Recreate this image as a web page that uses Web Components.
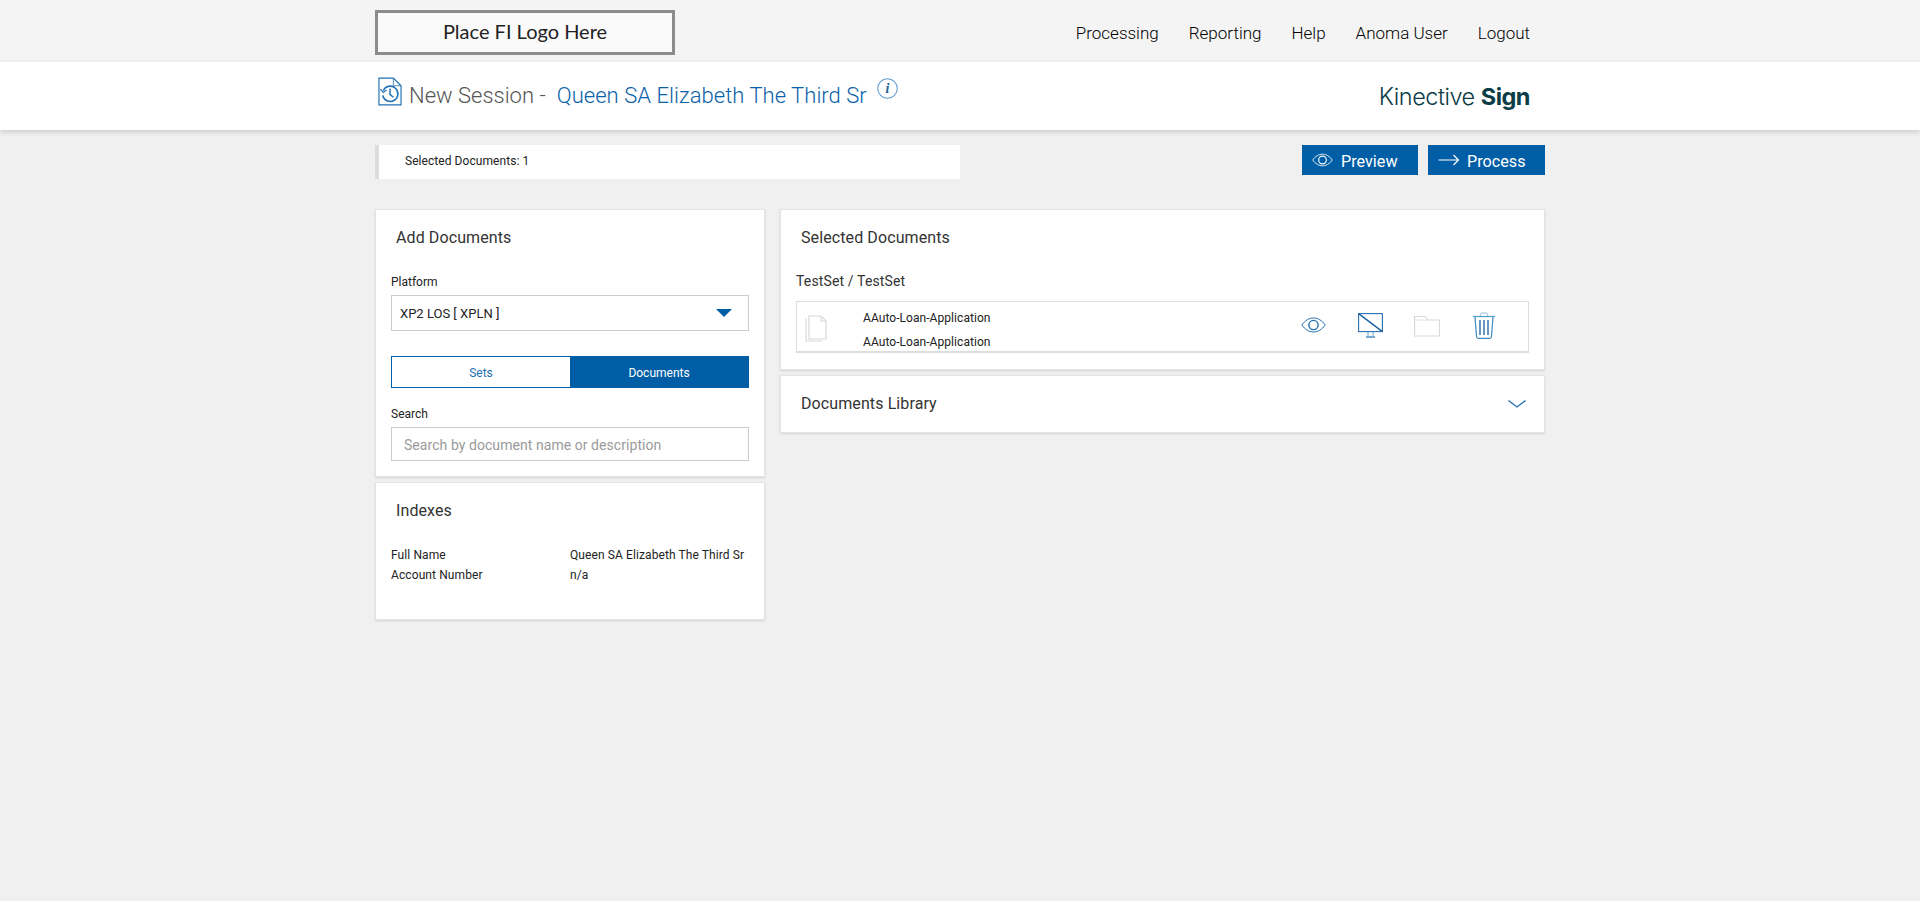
<!DOCTYPE html>
<html lang="en">
<head>
<meta charset="utf-8">
<title>New Session</title>
<style>
  html, body { margin: 0; padding: 0; background: #f0f0f0; }
  body { font-family: Roboto, "Liberation Sans", sans-serif; color: #222; min-height: 901px; }
</style>
</head>
<body>
<top-bar></top-bar>
<session-header></session-header>
<session-main></session-main>

<script>
// Iconos en un solo sitio
const ICONS = {
  history: `<svg width="24" height="29" viewBox="0 0 25 30" fill="none"><path d="M1 1h15l8 8v20H1z" stroke="#1f6fb2" stroke-width="1.2"/><path d="M16 1v8h8" stroke="#1f6fb2" stroke-width=".8"/><path d="M5.500 14a8 8 0 1 1-.6 5" stroke="#1f6fb2" stroke-width="1.6"/><path d="M2.500 12.500l3 3.500 3.500-2.500" stroke="#1f6fb2" stroke-width="1.2"/><path d="M12.500 12v6l3.500 3" stroke="#1f6fb2" stroke-width="1.5"/></svg>`,
  info: `<svg width="21" height="21" viewBox="0 0 18 18" fill="none"><circle cx="9" cy="9" r="8.4" stroke="#5b9bd0" stroke-width=".9"/><text x="9" y="13.200" text-anchor="middle" font-family="Liberation Serif" font-style="italic" font-weight="700" font-size="12" fill="#1f5f99">i</text></svg>`,
  eye: `<svg width="25" height="16" viewBox="0 0 25 16" fill="none"><path d="M.8 8C4 3.500 8 1 12.500 1S21 3.500 24.200 8C21 12.500 17 15 12.500 15S4 12.500.8 8z" stroke="currentColor"/><circle cx="12.500" cy="8" r="4.600" stroke="currentColor" stroke-width="1.4"/></svg>`,
  arrow: `<svg width="21" height="12" viewBox="0 0 21 12" fill="none"><path d="M0 6h20M15 1l5 5-5 5" stroke="#fff" stroke-width="1.2"/></svg>`,
  docs: `<svg width="22" height="27" viewBox="0 0 22 27" fill="none"><path d="M1 3.500v22.500h16" stroke="#e0d8d0" stroke-width="1.2"/><path d="M4 1h12l5 5v18H4z" stroke="#d8d8d8" stroke-width="1.2" fill="#fff"/><path d="M16 1v5h5" stroke="#d8d8d8"/></svg>`,
  monitor: `<svg width="25" height="25" viewBox="0 0 25 25" fill="none"><rect x=".6" y=".6" width="23.800" height="18" stroke="#2a6fae" stroke-width="1.1"/><path d="M.6.6l23.800 18" stroke="#1a62a6" stroke-width="1.4"/><path d="M10 19v4M15 19v4" stroke="#6aa7d6"/><path d="M8 24h9" stroke="#1f6fb2" stroke-width="1.2"/></svg>`,
  folder: `<svg width="26" height="22" viewBox="0 0 26 22" fill="none"><path d="M.6 21V1.500h10.400l3 3.500h11.400v16z" stroke="#d8d8d8" stroke-width="1.1"/><path d="M.6 5h13.400" stroke="#e2e2e2"/></svg>`,
  trash: `<svg width="22" height="27" viewBox="0 0 22 27" fill="none"><path d="M0 4.500h22" stroke="#4a9ed2" stroke-width="1.2"/><path d="M7.500 4V2.500Q7.500 1 9 1h4q1.500 0 1.500 1.500V4" stroke="#9cbcd4"/><path d="M2 5l1.500 19.500q.2 1.800 2 1.800h11q1.800 0 2-1.800L20 5" stroke="#3d8cc4" stroke-width="1.2"/><path d="M7 8v15M11 8v15M15 8v15" stroke="#15609f" stroke-width="1.3"/></svg>`,
  chevron: `<svg width="18" height="8" viewBox="0 0 18 8" fill="none"><path d="M.5.5L9 7l8.500-6.500" stroke="#1f6fb2" stroke-width="1.3"/></svg>`
};

class AppIcon extends HTMLElement {
  constructor() {
    super();
    this.attachShadow({ mode: "open" });
  }
  connectedCallback() {
    this.shadowRoot.innerHTML = `<style>:host{display:inline-flex;flex:none;line-height:0}</style>${ICONS[this.getAttribute("name")] || ""}`;
    const w = this.getAttribute("width");
    if (w) this.shadowRoot.querySelector("svg").setAttribute("width", w);
  }
}
customElements.define("app-icon", AppIcon);

// Barra superior
class TopBar extends HTMLElement {
  constructor() {
    super();
    this.attachShadow({ mode: "open" }).innerHTML = `
      <style>
        :host { display: block; background: #f4f4f4; height: 62px; }
        .inner { width: 1170px; margin: 0 auto; height: 100%; display: flex; justify-content: space-between; box-sizing: border-box; padding: 10px 15px 0 0; }
        .logo { width: 300px; height: 45px; box-sizing: border-box; border: 3px solid #8c8c8c; background: #fafafa; display: flex; align-items: center; justify-content: center; padding-bottom: 3px; font: 400 20px Lato, sans-serif; color: #222; }
        nav { display: flex; gap: 30px; padding-top: 13px; font-size: 17px; font-weight: 300; color: #000; }
      </style>
      <div class="inner">
        <div class="logo">Place FI Logo Here</div>
        <nav><span>Processing</span><span>Reporting</span><span>Help</span><span>Anoma User</span><span>Logout</span></nav>
      </div>`;
  }
}
customElements.define("top-bar", TopBar);

// Cabecera blanca con la sesión
class SessionHeader extends HTMLElement {
  constructor() {
    super();
    this.attachShadow({ mode: "open" }).innerHTML = `
      <style>
        :host { display: block; background: #fff; height: 68px; box-shadow: 0 2px 5px rgba(0,0,0,.15); position: relative; }
        .inner { width: 1170px; margin: 0 auto; height: 100%; display: flex; justify-content: space-between; box-sizing: border-box; padding: 15px 15px 0 3px; }
        .title { display: flex; align-items: flex-start; font-size: 22px; font-weight: 300; color: #555; }
        .title span { margin-top: 6px; }
        .new { margin-left: 7px; }
        .name { color: #0b62a8; margin-left: 11px; letter-spacing: .04px; }
        app-icon[name=info] { margin: 1px 0 0 10px; }
        .brand { font: 300 23.5px Inter, sans-serif; color: #0c3c46; padding-top: 5px; letter-spacing: -.5px; }
        .brand b { font-weight: 700; }
      </style>
      <div class="inner">
        <div class="title"><app-icon name="history"></app-icon><span class="new">New Session -</span><span class="name">Queen SA Elizabeth The Third Sr</span><app-icon name="info"></app-icon></div>
        <div class="brand">Kinective <b>Sign</b></div>
      </div>`;
  }
}
customElements.define("session-header", SessionHeader);

class ActionButton extends HTMLElement {
  constructor() {
    super();
    this.attachShadow({ mode: "open" }).innerHTML = `
      <style>
        :host { display: inline-flex; align-items: center; height: 30px; box-sizing: border-box; padding: 2px 0 0 10px; background: #005ea6; color: #fff; font-size: 16.2px; }
        .ic { width: 29px; display: flex; align-items: center; margin-top: -2px; }
        ::slotted(app-icon) { color: #fff; }
      </style>
      <span class="ic"><slot name="icon"></slot></span><slot></slot>`;
  }
}
customElements.define("action-button", ActionButton);

// Tarjeta blanca con título
class PanelCard extends HTMLElement {
  constructor() {
    super();
    this.attachShadow({ mode: "open" }).innerHTML = `
      <style>
        :host { display: block; background: #fff; border: 1px solid #e4e4e4; box-shadow: 0 1px 2px rgba(0,0,0,.12); box-sizing: border-box; }
        .head { display: flex; justify-content: space-between; align-items: center; font-size: 16px; letter-spacing: .1px; color: #333; padding: 18px 18px 0 20px; line-height: 19px; }
      </style>
      <div class="head"><span id="t"></span><slot name="action"></slot></div>
      <slot></slot>`;
  }
  connectedCallback() {
    this.shadowRoot.querySelector("#t").textContent = this.getAttribute("heading");
  }
}
customElements.define("panel-card", PanelCard);

class FormLabel extends HTMLElement {
  constructor() {
    super();
    this.attachShadow({ mode: "open" }).innerHTML = `
      <style>:host { display: block; font-size: 12px; line-height: 14px; color: #222; }</style><slot></slot>`;
  }
}
customElements.define("form-label", FormLabel);

class PlatformSelect extends HTMLElement {
  constructor() {
    super();
    this.attachShadow({ mode: "open" }).innerHTML = `
      <style>
        :host { display: flex; align-items: center; justify-content: space-between; height: 36px; box-sizing: border-box; border: 1px solid #ccc; padding: 0 16px 0 8px; font-size: 13px; color: #222; }
        i { width: 0; height: 0; border: 8px solid transparent; border-top: 8px solid #005ea6; border-bottom: 0; }
      </style>
      <slot></slot><i></i>`;
  }
}
customElements.define("platform-select", PlatformSelect);

class SegToggle extends HTMLElement {
  constructor() {
    super();
    this.attachShadow({ mode: "open" }).innerHTML = `
      <style>
        :host { display: grid; grid-template-columns: 1fr 1fr; height: 32px; font-size: 12px; border: 1px solid #005ea6; box-sizing: border-box; }
        div { display: flex; align-items: center; justify-content: center; padding-top: 2px; }
        .off { color: #1f6fb2; background: #fff; }
        .on { color: #fff; background: #005ea6; }
      </style>
      <div class="off">Sets</div><div class="on">Documents</div>`;
  }
}
customElements.define("seg-toggle", SegToggle);

class SearchField extends HTMLElement {
  constructor() {
    super();
    this.attachShadow({ mode: "open" }).innerHTML = `
      <style>
        :host { display: block; }
        input { display: block; width: 100%; height: 34px; box-sizing: border-box; border: 1px solid #ccc; outline: 0; padding: 2px 12px 0; font: 400 14px Roboto, sans-serif; letter-spacing: .06px; color: #222; background: #fff; border-radius: 0; }
        input::placeholder { color: #9a9a9a; opacity: 1; }
      </style>
      <input placeholder="Search by document name or description">`;
  }
}
customElements.define("search-field", SearchField);

class DocRow extends HTMLElement {
  constructor() {
    super();
    this.attachShadow({ mode: "open" }).innerHTML = `
      <style>
        :host { display: flex; align-items: center; height: 52px; box-sizing: border-box; border: 1px solid #ddd; border-bottom-width: 2px; font-size: 12px; letter-spacing: .06px; color: #222; }
        .ic { width: 66px; padding-left: 8px; box-sizing: border-box; display: flex; padding-top: 3px; }
        .names { width: 439px; display: flex; flex-direction: column; gap: 10px; line-height: 14px; padding-top: 7px; box-sizing: border-box; }
        .acts { display: flex; align-items: center; color: #1f6fb2; margin-top: -2px; }
      </style>
      <div class="ic"><app-icon name="docs"></app-icon></div>
      <div class="names"><span>AAuto-Loan-Application</span><span>AAuto-Loan-Application</span></div>
      <div class="acts">
        <app-icon name="eye" style="margin:-2px 32px 0 -1px"></app-icon>
        <app-icon name="monitor" style="margin-right:31px"></app-icon>
        <app-icon name="folder" style="margin-right:33px"></app-icon>
        <app-icon name="trash"></app-icon>
      </div>`;
  }
}
customElements.define("doc-row", DocRow);

// Contenido principal
class SessionMain extends HTMLElement {
  constructor() {
    super();
    this.attachShadow({ mode: "open" }).innerHTML = `
      <style>
        :host { display: block; width: 1170px; margin: 0 auto; padding-top: 15px; }
        .status { display: flex; justify-content: space-between; align-items: flex-start; margin-bottom: 30px; }
        .count { width: 585px; height: 34px; box-sizing: border-box; background: #fff; border-left: 4px solid #dcdcdc; padding: 0 0 2px 26px; font-size: 12px; letter-spacing: .06px; display: flex; align-items: center; color: #222; }
        .btns { display: flex; gap: 10px; }
        .cols { display: grid; grid-template-columns: 390px 765px; justify-content: space-between; }
        .col { display: flex; flex-direction: column; gap: 5px; }
        .body { padding: 0 15px; }
        .indexes { display: grid; grid-template-columns: 179px 1fr; font-size: 12px; letter-spacing: .1px; line-height: 20px; margin-top: 25px; color: #222; }
        .set { font-size: 14px; letter-spacing: .14px; line-height: 16px; color: #333; margin-top: 26px; }
      </style>
      <div class="status">
        <div class="count">Selected Documents: 1</div>
        <div class="btns">
          <action-button style="width:116px"><app-icon slot="icon" name="eye" width="21"></app-icon>Preview</action-button>
          <action-button style="width:117px"><app-icon slot="icon" name="arrow" width="22"></app-icon>Process</action-button>
        </div>
      </div>
      <div class="cols">
        <div class="col">
          <panel-card heading="Add Documents" style="height:268px">
            <div class="body">
              <form-label style="margin-top:28px;margin-bottom:6px">Platform</form-label>
              <platform-select>XP2 LOS [ XPLN ]</platform-select>
              <seg-toggle style="margin-top:25px"></seg-toggle>
              <form-label style="margin-top:19px;margin-bottom:6px">Search</form-label>
              <search-field></search-field>
            </div>
          </panel-card>
          <panel-card heading="Indexes" style="height:138px">
            <div class="body indexes">
              <span>Full Name</span><span>Queen SA Elizabeth The Third Sr</span>
              <span>Account Number</span><span>n/a</span>
            </div>
          </panel-card>
        </div>
        <div class="col">
          <panel-card heading="Selected Documents" style="height:161px">
            <div class="body">
              <div class="set">TestSet / TestSet</div>
              <doc-row style="margin-top:12px"></doc-row>
            </div>
          </panel-card>
          <panel-card heading="Documents Library" style="height:58px">
            <app-icon slot="action" name="chevron"></app-icon>
          </panel-card>
        </div>
      </div>`;
  }
}
customElements.define("session-main", SessionMain);
</script>
</body>
</html>
